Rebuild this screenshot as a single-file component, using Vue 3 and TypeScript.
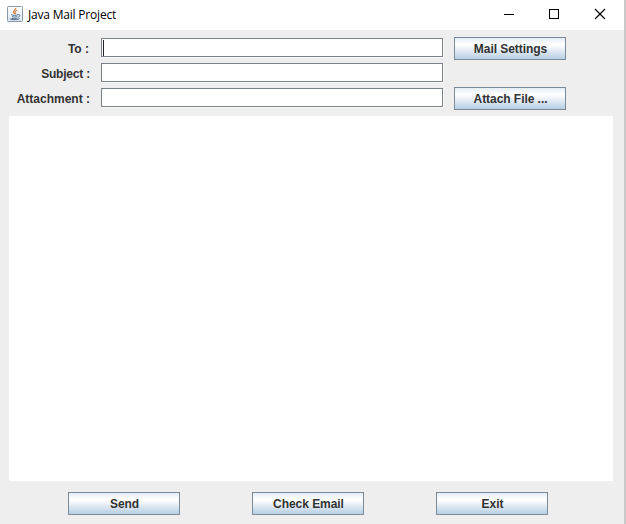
<script setup lang="ts">
import { onMounted, ref } from 'vue'

interface Field {
  id: string
  label: string
  action?: string
}

const fields: Field[] = [
  { id: 'to', label: 'To :', action: 'Mail Settings' },
  { id: 'subject', label: 'Subject :' },
  { id: 'attachment', label: 'Attachment :', action: 'Attach File ...' },
]
const actions: string[] = ['Send', 'Check Email', 'Exit']
const values = ref<Record<string, string>>({ to: '', subject: '', attachment: '' })
const message = ref('')
const focused = ref('')

onMounted(() => {
  focused.value = 'to'
})
</script>

<template>
  <div class="window">
    <header class="titlebar">
      <svg class="app-icon" width="16" height="16" viewBox="0 0 16 16">
        <defs>
          <linearGradient id="tile" x1="0" y1="0" x2="0" y2="1">
            <stop offset="0" stop-color="#ffffff" />
            <stop offset="1" stop-color="#dbe5ee" />
          </linearGradient>
        </defs>
        <rect x=".5" y=".5" width="15" height="15" rx=".8" fill="url(#tile)" stroke="#8799aa" />
        <path d="M8.8 1.8C9.3 3.8 5.3 4.6 6.6 6.4L7.6 8M10.3 4.3C7.8 5.2 7.5 6.1 8.7 7.8" fill="none" stroke="#d88545" stroke-width="1.2" />
        <path d="M4.2 8.7C5.5 9.6 9.7 9.4 11 8.7M5 10.6C6.5 11.2 9 11.1 10.2 10.6M11.2 8.7C13.6 8.2 13.3 10.7 11 11.2M3 12.4C1.8 13.9 11.5 14.2 12.5 12.6M4.5 12.4C6.5 12.8 9 12.8 10.5 12.3" fill="none" stroke="#4d6f8c" />
      </svg>
      <h1 class="title">Java Mail Project</h1>
      <svg class="controls" width="104" height="12" viewBox="0 0 104 12">
        <path d="M0 6.5h10M45.500 1.500h9v9h-9z" fill="none" stroke="#000" shape-rendering="crispEdges" />
        <path d="M91 1l10 10M101 1L91 11" fill="none" stroke="#000" stroke-width="1.15" />
      </svg>
    </header>
    <main class="content">
      <form class="form" @submit.prevent>
        <div v-for="field in fields" :key="field.id" class="row">
          <label :for="field.id" :class="['label', field.id]">{{ field.label }}</label>
          <div class="field">
            <span v-if="focused === field.id" class="caret"></span>
            <input :id="field.id" v-model="values[field.id]" class="input" type="text" />
          </div>
          <button v-if="field.action" class="button" type="button">{{ field.action }}</button>
        </div>
      </form>
      <textarea v-model="message" class="message"></textarea>
      <footer class="actions">
        <button v-for="action in actions" :key="action" class="button" type="button">{{ action }}</button>
      </footer>
    </main>
  </div>
</template>

<style>
body {
  margin: 0;
  overflow: hidden;
}
</style>

<style scoped>
.window {
  box-sizing: border-box;
  width: 626px;
  height: 524px;
  display: flex;
  flex-direction: column;
  border-right: 2px solid #c9c9c9;
  background: #eee;
  color: #333;
  font: bold 12px "Liberation Sans", Arial, sans-serif;
}
.titlebar {
  box-sizing: border-box;
  height: 30px;
  flex: none;
  display: flex;
  align-items: center;
  padding: 0 16px 2px 7px;
  background: #fff;
}
.app-icon {
  flex: none;
}
.title {
  flex: 1;
  margin: 1px 0 0 5px;
  color: #000;
  font: 12px/16px "Open Sans", "Noto Sans", sans-serif;
  letter-spacing: -0.2px;
  white-space: nowrap;
}
.controls {
  flex: none;
}
.content {
  flex: 1;
  display: flex;
  flex-direction: column;
  padding: 7px 11px 9px 9px;
}
.form {
  display: grid;
  grid-auto-rows: 23px;
  row-gap: 2px;
}
.row {
  display: grid;
  grid-template-columns: 81px 342px 112px;
  column-gap: 11px;
  align-items: start;
}
.label {
  padding-top: 1px;
  line-height: 23px;
  text-align: right;
  white-space: nowrap;
}
.label.to {
  padding-right: 1px;
}
.label.subject {
  letter-spacing: -0.2px;
}
.field {
  box-sizing: border-box;
  height: 19px;
  display: flex;
  align-items: center;
  margin-top: 1px;
  padding-left: 1px;
  border: 1px solid #7a8188;
  background: #fff;
  box-shadow: 1px 1px 0 #fafafa;
}
.caret {
  width: 1px;
  height: 16px;
  background: #222;
}
.input {
  flex: 1;
  min-width: 0;
  height: 16px;
  padding: 0;
  border: 0;
  outline: 0;
  background: transparent;
  font: 12px "Liberation Sans", sans-serif;
}
.button {
  box-sizing: border-box;
  width: 112px;
  height: 23px;
  padding: 1px 0 0 1px;
  border: 1px solid #7a8a99;
  border-radius: 0;
  background: linear-gradient(#e3edf6 0%, #fff 30%, #f6f9fc 42%, #dce7f2 65%, #b8cfe5 100%);
  color: #333;
  font: bold 12px/20px "Liberation Sans", Arial, sans-serif;
  letter-spacing: -0.05px;
}
.message {
  display: block;
  box-sizing: border-box;
  width: 604px;
  height: 365px;
  margin: 6px 0 11px;
  padding: 4px;
  border: 0;
  outline: 0;
  resize: none;
  background: #fff;
  font: 12px "Liberation Mono", monospace;
}
.actions {
  display: flex;
  gap: 72px;
  padding-left: 59px;
}
</style>
